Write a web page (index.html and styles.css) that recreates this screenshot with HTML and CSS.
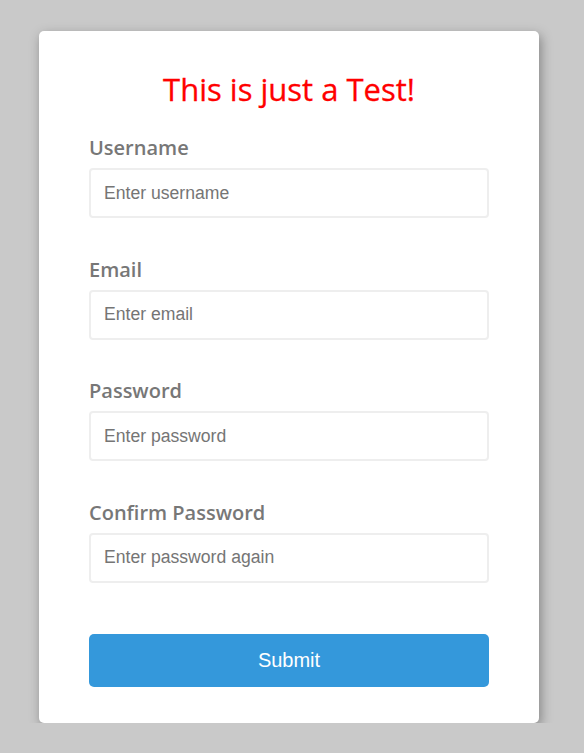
FILE: index.html
```html
<!DOCTYPE html>
<html>
<head>
<meta charset="utf-8">
<link rel="stylesheet" href="styles.css">
</head>
<body>
<div class="card">
  <h1 class="title">This is just a Test!</h1>
  <form class="form">
    <div class="group">
      <label class="label">Username</label>
      <input class="input" type="text" placeholder="Enter username">
    </div>
    <div class="group">
      <label class="label">Email</label>
      <input class="input" type="text" placeholder="Enter email">
    </div>
    <div class="group">
      <label class="label">Password</label>
      <input class="input" type="password" placeholder="Enter password">
    </div>
    <div class="group">
      <label class="label">Confirm Password</label>
      <input class="input" type="password" placeholder="Enter password again">
    </div>
    <button class="submit" type="button">Submit</button>
  </form>
</div>
</body>
</html>
```
FILE: styles.css
```css
* { box-sizing: border-box; }
html, body { margin: 0; padding: 0; }
body {
  background: #c9c9c9;
  font-family: "Open Sans", sans-serif;
  padding-top: 31px;
}
.card {
  width: 500px;
  margin-left: 39px;
  background: #fff;
  border-radius: 5px;
  box-shadow: 2px 4px 12px rgba(0,0,0,0.35);
  padding: 38px 50px 36px;
}
.title {
  margin: 0 0 25px;
  text-align: center;
  color: #ff0000;
  font-size: 31px;
  font-weight: 400;
  line-height: 40px;
  -webkit-text-stroke: 0.3px #ff0000;
}
.form { display: flex; flex-direction: column; }
.group {
  display: flex;
  flex-direction: column;
  margin-bottom: 37.5px;
}
.label {
  color: #777;
  font-size: 20px;
  font-weight: 600;
  line-height: 28px;
  margin-bottom: 6px;
}
.input {
  width: 400px;
  height: 50px;
  border: 2px solid #eee;
  border-radius: 4px;
  padding: 0 13px;
  font-family: "Liberation Sans", Arial, sans-serif;
  font-size: 17.6px;
  color: #333;
  outline: none;
}
.input::placeholder { color: #757575; }
.submit {
  margin-top: 14px;
  width: 400px;
  height: 53px;
  border: none;
  border-radius: 5px;
  background: #3498db;
  color: #fff;
  font-family: "Liberation Sans", Arial, sans-serif;
  font-size: 20px;
}
```
